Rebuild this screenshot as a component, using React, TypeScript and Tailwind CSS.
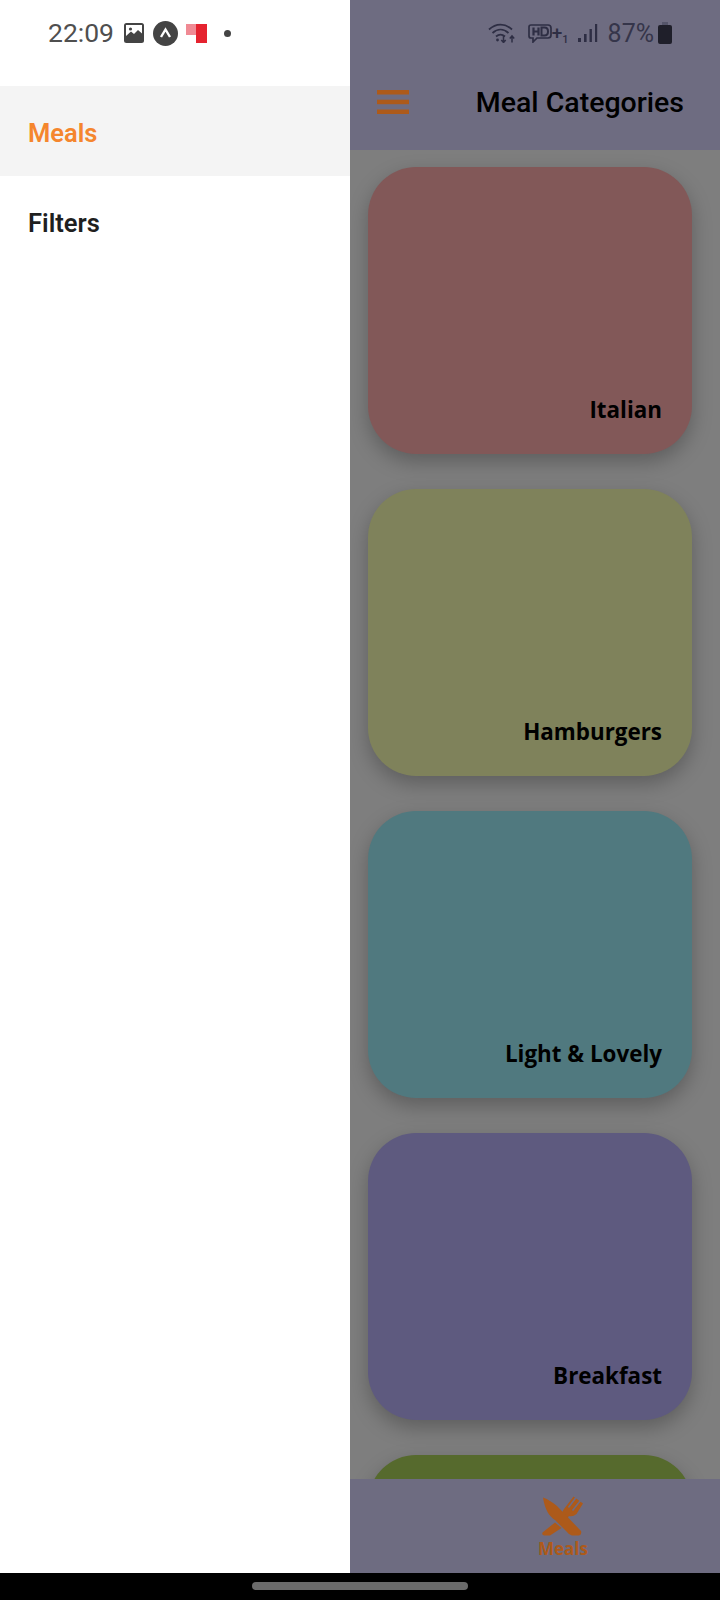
const cards = [
  { name: "Italian", bg: "bg-[#825858]" },
  { name: "Hamburgers", bg: "bg-[#7f825b]" },
  { name: "Light & Lovely", bg: "bg-[#50797f]" },
  { name: "Breakfast", bg: "bg-[#5e5a7f]" },
  { name: "", bg: "bg-[#566a2d]" },
];

function LeftIcons() {
  return (
    <div className="flex items-center ml-[10px]">
      <svg width="20" height="20" viewBox="0 0 20 20" className="mr-[9px]">
        <rect x="0" y="0" width="20" height="20" rx="2.5" fill="#444" />
        <rect x="2" y="2" width="16" height="15" fill="#fff" />
        <path d="M2 17 L2 13 L7 8.5 L10 11 L14 7 L18 10.5 L18 17 Z" fill="#444" />
        <circle cx="6.5" cy="6" r="1.6" fill="#444" />
      </svg>
      <svg width="25" height="25" viewBox="0 0 25 25" className="mr-[8px]">
        <circle cx="12.5" cy="12.5" r="12.5" fill="#444" />
        <path d="M8 16 L12.5 8.5 L17 16" stroke="#fff" strokeWidth="2.4" fill="none" />
      </svg>
      <svg width="21" height="19" viewBox="0 0 21 19" className="mr-[17px]">
        <rect x="0" y="0" width="11" height="11" fill="#f08a94" />
        <rect x="10" y="0" width="11" height="19" fill="#e5232f" />
      </svg>
      <div className="w-[7px] h-[7px] rounded-full bg-[#444]" />
    </div>
  );
}

function RightIcons() {
  const c = "#2e2e44";
  return (
    <div className="flex items-center justify-end pr-[48px]">
      <svg width="28" height="20" viewBox="0 0 28 20" className="mr-[12px]" fill="none" stroke={c}>
        <path d="M1 6.5 C8 0 17 0 24 6.5" strokeWidth="1.8" />
        <path d="M4.5 10 C9.5 5.5 15.5 5.5 20.5 10" strokeWidth="1.8" />
        <path d="M8 13.5 C11 11 14 11 17 13.5" strokeWidth="1.8" />
        <circle cx="9.5" cy="17" r="1.4" fill={c} stroke="none" />
        <path d="M15.5 13 V19.5 M13.3 17 L15.5 19.5 L17.7 17" strokeWidth="1.5" />
        <path d="M24 19.5 V13 M21.8 15.5 L24 13 L26.2 15.5" strokeWidth="1.5" />
      </svg>
      <svg width="24" height="19" viewBox="0 0 24 19" fill="none" stroke={c} strokeWidth="1.7">
        <path d="M3 1 H20 Q23 1 23 4 V11 Q23 14 20 14 H9 L5 18 V14 H3 Q1 14 1 12 V3 Q1 1 3 1 Z" />
        <path d="M5.5 3.5 V11.5 M10.5 3.5 V11.5 M5.5 7.5 H10.5" strokeWidth="2.2" />
        <path d="M13.5 3.5 V11.5 H16.5 Q20 11.5 20 7.5 Q20 3.5 16.5 3.5 Z" strokeWidth="2" />
      </svg>
      <span className="text-[19px] font-medium leading-none text-[#2e2e44] mb-[1px]">+</span>
      <span className="text-[11px] font-medium leading-none text-[#2e2e44] self-end mb-[1px]">1</span>
      <svg width="20" height="20" viewBox="0 0 20 20" className="ml-[9px]" fill={c}>
        <rect x="0" y="15" width="3" height="4" />
        <rect x="6" y="11" width="2.6" height="8" />
        <rect x="11.5" y="6" width="2.4" height="13" />
        <rect x="17" y="1" width="2.2" height="18" />
      </svg>
      <span className="font-normal text-[25px] leading-none text-[#35354a] ml-[10px]">87%</span>
      <svg width="14" height="22" viewBox="0 0 14 22" className="ml-[4px]" fill="#1f1f2a">
        <rect x="4" y="0" width="6" height="3" fill="#55556a" />
        <rect x="0" y="3" width="14" height="19" rx="2" />
      </svg>
    </div>
  );
}

function MealsIcon() {
  return (
    <svg width="42" height="40" viewBox="0 0 42 40" fill="#ad5a1a">
      <path d="M22 13 L31.5 0.5 L41 7.5 L34.5 18 Q31 21 27 20 L24 24 L18 20 Z" />
      <path d="M26.5 11.5 L34 1.5 M30.5 14.5 L38.5 4.5" stroke="#6e6c81" strokeWidth="1.6" fill="none" />
      <path d="M1 1.5 C6 3 11 7 15 10 L39 35 Q40 39 37 39.5 L30 39.5 Q27 39 25 36 L13 24 C7 20 3 14 1 1.5 Z" />
      <path d="M0.5 36.5 L13 26.5 L19.5 32 L8 39.5 L2 39.5 Q-0.5 39 0.5 36.5 Z" />
    </svg>
  );
}

export default function App() {
  return (
    <div className="w-[720px] h-[1600px] flex flex-col overflow-hidden bg-black font-['Roboto',sans-serif]">
      <div className="flex h-[1573px]">
        <aside className="w-[350px] bg-white flex flex-col">
          <div className="h-[66px] flex items-center pl-[48px]">
            <span className="text-[26.5px] font-normal text-[#4f4f4f] leading-none">22:09</span>
            <LeftIcons />
          </div>
          <div className="h-[20px]" />
          <div className="h-[90px] flex items-center pl-[28px] pt-[5px] bg-[#f4f4f4]">
            <span className="text-[25.5px] font-semibold text-[#f5862d]">Meals</span>
          </div>
          <div className="h-[90px] flex items-center pl-[28px] pt-[5px]">
            <span className="text-[25.5px] font-semibold text-[#1f1f1f]">Filters</span>
          </div>
        </aside>
        <main className="flex-1 flex flex-col min-w-0">
          <header className="h-[150px] bg-[#6e6c81] flex flex-col shrink-0">
            <div className="h-[66px] flex items-center justify-end">
              <RightIcons />
            </div>
            <div className="h-[72px] flex items-center justify-between pl-[27px] pr-[36px]">
              <svg width="32" height="24" viewBox="0 0 32 24" fill="#ad5a1a">
                <rect x="0" y="0" width="32" height="4.5" />
                <rect x="0" y="9.7" width="32" height="4.5" />
                <rect x="0" y="19.5" width="32" height="4.5" />
              </svg>
              <span className="text-[28.5px] font-medium text-black leading-none mt-[2px]">Meal Categories</span>
            </div>
          </header>
          <div className="flex-1 min-h-0 overflow-hidden bg-[#7e7e7e] pl-[18px] pr-[28px] pt-[17px] flex flex-col gap-[35px]">
            {cards.map((card, i) => (
              <div
                key={i}
                className={`${card.bg} shrink-0 h-[287px] rounded-[48px] shadow-[0_8px_20px_rgba(0,0,0,0.25)] flex items-end justify-end pr-[30px] pb-[29px]`}
              >
                <span className="font-['Open_Sans',sans-serif] font-bold text-[22.4px] leading-[30px] text-black">
                  {card.name}
                </span>
              </div>
            ))}
          </div>
          <nav className="h-[94px] shrink-0 bg-[#6e6c81] pl-[163px] pt-[17px]">
            <div className="w-[100px] flex flex-col items-center">
              <MealsIcon />
              <span className="font-['Open_Sans',sans-serif] font-bold text-[17px] leading-[20px] text-[#ad5a1a] mt-[3px]">
                Meals
              </span>
            </div>
          </nav>
        </main>
      </div>
      <div className="flex-1 flex items-center justify-center pb-[1px]">
        <div className="w-[216px] h-[8px] rounded-full bg-[#6a6a6a]" />
      </div>
    </div>
  );
}
